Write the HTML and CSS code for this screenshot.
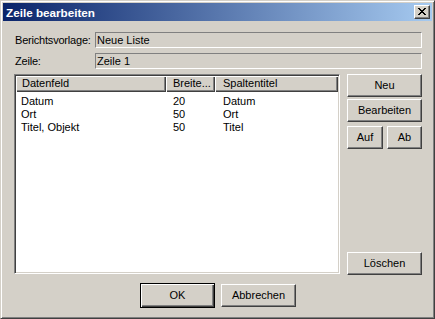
FILE: index.html
```html
<!DOCTYPE html>
<html lang="de">
<head>
  <meta charset="UTF-8">
  <title>Zeile bearbeiten</title>
  <link rel="stylesheet" href="styles.css">
</head>
<body>
  <div class="window">
    <!-- Titelleiste -->
    <div class="titlebar">
      <span class="title">Zeile bearbeiten</span>
      <div class="close">
        <svg width="8" height="7" viewBox="0 0 8 7" shape-rendering="crispEdges">
          <path fill="#000" d="M0 0h2v1H0zM6 0h2v1H6zM1 1h2v1H1zM5 1h2v1H5zM2 2h4v1H2zM3 3h2v1H3zM2 4h4v1H2zM1 5h2v1H1zM5 5h2v1H5zM0 6h2v1H0zM6 6h2v1H6z"/>
        </svg>
      </div>
    </div>

    <div class="content">
      <div class="fields">
        <span class="label">Berichtsvorlage:</span>
        <div class="field">Neue Liste</div>
        <span class="label">Zeile:</span>
        <div class="field">Zeile 1</div>
      </div>

      <div class="main">
        <div class="list">
          <div class="list-head">
            <div class="hcell col-feld">Datenfeld</div>
            <div class="hcell col-breite">Breite...</div>
            <div class="hcell col-titel">Spaltentitel</div>
          </div>
          <div class="rows">
            <div class="row"><span class="col-feld">Datum</span><span class="col-breite">20</span><span class="col-titel">Datum</span></div>
            <div class="row"><span class="col-feld">Ort</span><span class="col-breite">50</span><span class="col-titel">Ort</span></div>
            <div class="row"><span class="col-feld">Titel, Objekt</span><span class="col-breite">50</span><span class="col-titel">Titel</span></div>
          </div>
        </div>

        <div class="side">
          <div class="btn">Neu</div>
          <div class="btn btn-edit">Bearbeiten</div>
          <div class="updown">
            <div class="btn btn-up">Auf</div>
            <div class="btn btn-down">Ab</div>
          </div>
          <div class="btn btn-delete">Löschen</div>
        </div>
      </div>

      <div class="footer">
        <div class="btn btn-default">OK</div>
        <div class="btn">Abbrechen</div>
      </div>
    </div>
  </div>
</body>
</html>
```

FILE: styles.css
```css
body {
  margin: 0;
  font-family: "Liberation Sans", Arial, sans-serif;
  font-size: 11px;
  color: #000;
}

.window {
  width: 435px;
  height: 319px;
  box-sizing: border-box;
  background-color: #d4d0c8;
  border: 1px solid;
  border-color: #d4d0c8 #404040 #404040 #d4d0c8;
  box-shadow: inset 1px 1px #fff, inset -1px -1px #808080;
  padding: 2px;
  display: flex;
  flex-direction: column;
}

/* Titelleiste */
.titlebar {
  height: 18px;
  background: linear-gradient(to right, #0a246a, #a6caf0);
  display: flex;
  align-items: center;
  justify-content: space-between;
  padding: 0 2px;
}

.title {
  color: #fff;
  font-weight: bold;
  font-size: 11.7px;
  padding-left: 1px;
}

.close {
  width: 16px;
  height: 14px;
  box-sizing: border-box;
  background-color: #d4d0c8;
  border: 1px solid;
  border-color: #fff #404040 #404040 #fff;
  box-shadow: inset -1px -1px #808080;
  padding: 2px 0 0 3px;
}

.close svg {
  display: block;
}

/* Inhalt */
.content {
  flex: 1;
  padding: 11px 10px 0 11px;
}

.fields {
  display: grid;
  grid-template-columns: 81px 1fr;
  row-gap: 5px;
  align-items: center;
}

.label {
  padding-left: 1px;
  letter-spacing: -0.2px;
}

.field {
  height: 16px;
  box-sizing: border-box;
  border: 1px solid;
  border-color: #808080 #fff #fff #808080;
  padding-left: 1px;
  line-height: 14px;
}

.main {
  display: flex;
  align-items: flex-start;
  gap: 7px;
  margin-top: 5px;
}

/* Liste */
.list {
  width: 326px;
  height: 200px;
  box-sizing: border-box;
  background-color: #fff;
  border: 1px solid;
  border-color: #808080 #fff #fff #808080;
  box-shadow: inset 1px 1px #404040, inset -1px -1px #d4d0c8;
  padding: 1px;
}

.list-head {
  display: flex;
  height: 16px;
  background-color: #d4d0c8;
}

.hcell {
  box-sizing: border-box;
  height: 16px;
  line-height: 15px;
  box-shadow: inset 1px 1px #fff, inset -1px -1px #404040, inset -2px -2px #808080;
}

.col-feld {
  width: 150px;
  padding-left: 6px;
  box-sizing: border-box;
}

.col-breite {
  width: 49px;
  padding-left: 7px;
  box-sizing: border-box;
}

.col-titel {
  width: 123px;
  padding-left: 8px;
  box-sizing: border-box;
}

.rows {
  padding-top: 3px;
}

.row {
  display: flex;
  height: 13px;
  line-height: 13px;
}

.row .col-feld {
  padding-left: 5px;
}

/* Schaltflächen */
.btn {
  box-sizing: border-box;
  height: 23px;
  line-height: 21px;
  text-align: center;
  border: 1px solid;
  border-color: #fff #404040 #404040 #fff;
  box-shadow: inset -1px -1px #808080;
}

.side {
  width: 75px;
  height: 201px;
  display: flex;
  flex-direction: column;
}

.btn-edit {
  margin-top: 2px;
}

.updown {
  display: flex;
  gap: 4px;
  margin-top: 4px;
}

.btn-up {
  width: 36px;
}

.btn-down {
  width: 35px;
}

.btn-delete {
  margin-top: auto;
}

.footer {
  display: flex;
  justify-content: center;
  align-items: center;
  gap: 6px;
  margin-top: 8px;
}

.footer .btn {
  width: 75px;
}

.footer .btn-default {
  height: 25px;
  line-height: 23px;
  border: 1px solid #000;
  box-shadow: inset 1px 1px #fff, inset -1px -1px #404040, inset -2px -2px #808080;
}
```
